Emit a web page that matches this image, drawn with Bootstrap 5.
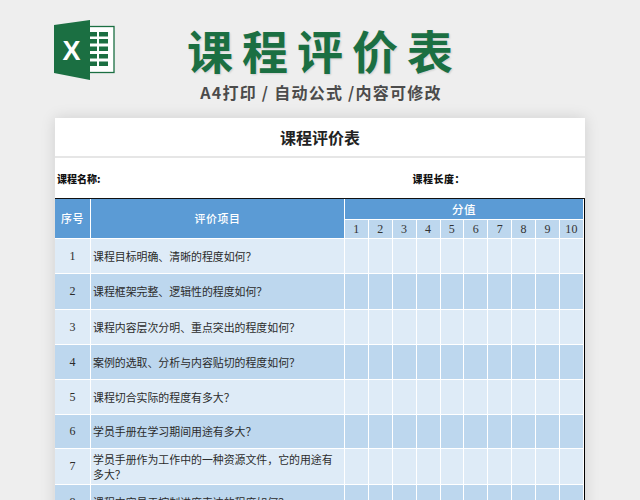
<!DOCTYPE html>
<html lang="zh">
<head>
<meta charset="utf-8">
<title>课程评价表</title>
<link href="https://cdn.jsdelivr.net/npm/bootstrap@5.3.0/dist/css/bootstrap.min.css" rel="stylesheet">
<style>
html,body{height:500px;overflow:hidden;}
body{background:#eeeeee;font-family:"Liberation Sans","Noto Sans CJK SC",sans-serif;color:#333;}
.banner{height:118px;padding-left:54px;}
.logo{width:62px;height:62px;margin-top:19px;margin-right:71px;}
.logo text{font:700 27px "Liberation Sans",sans-serif;fill:#fff;}
.head-block{width:264px;}
.big-title{font-family:"Noto Sans CJK SC",sans-serif;font-weight:700;font-size:46px;line-height:1;letter-spacing:9px;margin:26px -9px 0 0;color:#1b6f42;text-shadow:1px 1px 2px rgba(0,0,0,.14);white-space:nowrap;}
.sub-title{font-family:"Noto Sans CJK SC",sans-serif;font-weight:700;font-size:16px;line-height:1;letter-spacing:1.25px;margin:12px -22px 0 -18px;color:#4b4b4b;white-space:nowrap;}
.sheet{width:530px;margin-left:55px;background:#fff;box-shadow:0 0 14px rgba(0,0,0,.13);}
.sheet-title{height:40px;font-family:"Noto Sans CJK SC",sans-serif;font-weight:700;font-size:16px;color:#222;border-bottom:2px solid #e6e6e6;}
.sheet-meta{height:41px;font-family:"Noto Sans CJK SC",sans-serif;font-weight:900;font-size:10px;color:#111;padding-left:2px;border-bottom:1px solid #111;}
.meta-right{margin-left:312px;letter-spacing:.5px;}
.grid-wrap{border-right:1px solid #000;}
.eval{table-layout:fixed;border-collapse:separate;border-spacing:0;width:529px;margin:0;font-family:"Noto Sans CJK SC",sans-serif;font-size:10.9px;line-height:15px;}
.eval th,.eval td{padding:0;border:solid #fff;border-width:0 1px 1px 0;text-align:center;vertical-align:middle;font-weight:400;color:#2b2b2b;box-shadow:none;}
.eval .c-no{width:36px;}
.eval .c-item{width:254px;}
.eval th.blue{background:#5b9bd5;color:#fff;font-weight:500;letter-spacing:.6px;}
.eval th.h-top{height:21px;font-size:11.5px;}
.eval th.h-num{height:19px;background:#bdd7ee;font-family:"Liberation Serif",serif;font-size:12px;color:#333;letter-spacing:.3px;}
.eval td{height:35px;}
.eval td.item{text-align:left;padding:0 8px 0 2px;}
.eval tr.odd-row td{background:#deebf7;}
.eval tr.even-row td{background:#bdd7ee;}
.eval td.no{font-family:"Liberation Serif",serif;font-size:12px;}
.eval tr.tall td{height:36px;}
.eval tr.short td{height:34px;}
</style>
</head>
<body>
<div class="banner d-flex">
  <svg class="logo flex-shrink-0" viewBox="54 19 62 62" aria-label="Excel">
    <rect x="89" y="26.500" width="25" height="46" fill="#fff" stroke="#1b6f42" stroke-width="1.300"/>
    <g fill="#1b6f42">
      <rect x="99" y="32" width="9" height="4.500"/><rect x="99" y="39" width="9" height="4.500"/><rect x="99" y="46.500" width="9" height="4.500"/><rect x="99" y="54" width="9" height="4.500"/><rect x="99" y="61.500" width="9" height="4.500"/>
      <rect x="90" y="32" width="7" height="4.500"/><rect x="90" y="39" width="7" height="4.500"/><rect x="90" y="46.500" width="7" height="4.500"/><rect x="90" y="54" width="7" height="4.500"/><rect x="90" y="61.500" width="7" height="4.500"/>
      <polygon points="54,25 90,20 90,80 54,73"/>
    </g>
    <text x="71.500" y="60" text-anchor="middle">X</text>
  </svg>
  <div class="head-block text-center">
    <div class="big-title">课程评价表</div>
    <div class="sub-title">A4打印 / 自动公式 /内容可修改</div>
  </div>
</div>
<div class="sheet">
  <div class="sheet-title d-flex align-items-center justify-content-center">课程评价表</div>
  <div class="sheet-meta d-flex align-items-center"><span>课程名称:</span><span class="meta-right">课程长度：</span></div>
  <div class="grid-wrap">
    <table class="eval">
      <colgroup><col class="c-no"><col class="c-item"><col span="10"></colgroup>
      <thead>
        <tr><th rowspan="2" class="blue">序号</th><th rowspan="2" class="blue">评价项目</th><th colspan="10" class="blue h-top">分值</th></tr>
        <tr><th class="h-num">1</th><th class="h-num">2</th><th class="h-num">3</th><th class="h-num">4</th><th class="h-num">5</th><th class="h-num">6</th><th class="h-num">7</th><th class="h-num">8</th><th class="h-num">9</th><th class="h-num">10</th></tr>
      </thead>
      <tbody>
        <tr class="odd-row"><td class="no">1</td><td class="item">课程目标明确、清晰的程度如何？</td><td></td><td></td><td></td><td></td><td></td><td></td><td></td><td></td><td></td><td></td></tr>
        <tr class="even-row tall"><td class="no">2</td><td class="item">课程框架完整、逻辑性的程度如何？</td><td></td><td></td><td></td><td></td><td></td><td></td><td></td><td></td><td></td><td></td></tr>
        <tr class="odd-row"><td class="no">3</td><td class="item">课程内容层次分明、重点突出的程度如何？</td><td></td><td></td><td></td><td></td><td></td><td></td><td></td><td></td><td></td><td></td></tr>
        <tr class="even-row"><td class="no">4</td><td class="item">案例的选取、分析与内容贴切的程度如何？</td><td></td><td></td><td></td><td></td><td></td><td></td><td></td><td></td><td></td><td></td></tr>
        <tr class="odd-row"><td class="no">5</td><td class="item">课程切合实际的程度有多大？</td><td></td><td></td><td></td><td></td><td></td><td></td><td></td><td></td><td></td><td></td></tr>
        <tr class="even-row short"><td class="no">6</td><td class="item">学员手册在学习期间用途有多大？</td><td></td><td></td><td></td><td></td><td></td><td></td><td></td><td></td><td></td><td></td></tr>
        <tr class="odd-row tall"><td class="no">7</td><td class="item">学员手册作为工作中的一种资源文件，它的用途有多大？</td><td></td><td></td><td></td><td></td><td></td><td></td><td></td><td></td><td></td><td></td></tr>
        <tr class="even-row"><td class="no">8</td><td class="item">课程内容易于控制进度表达的程度如何？</td><td></td><td></td><td></td><td></td><td></td><td></td><td></td><td></td><td></td><td></td></tr>
      </tbody>
    </table>
  </div>
</div>
<script src="https://cdn.jsdelivr.net/npm/bootstrap@5.3.0/dist/js/bootstrap.bundle.min.js"></script>
</body>
</html>
